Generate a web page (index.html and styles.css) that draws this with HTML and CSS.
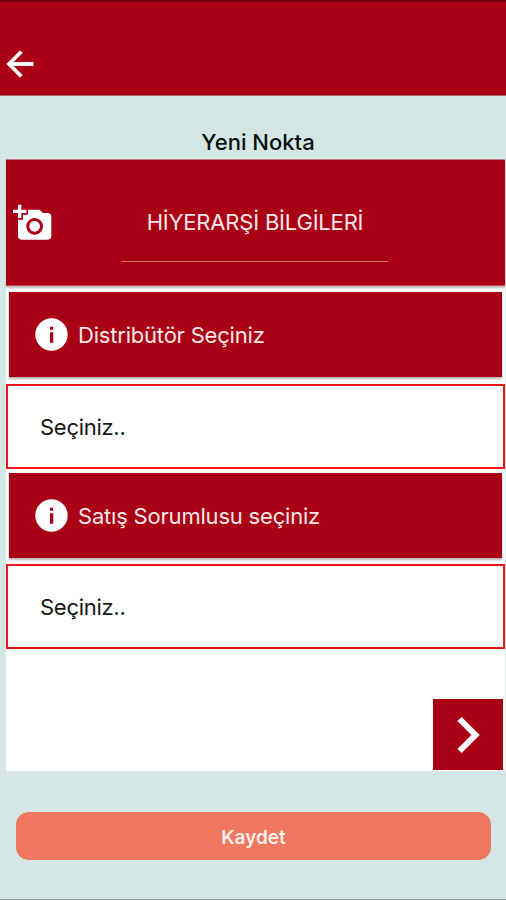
FILE: index.html
```html
<!DOCTYPE html>
<html lang="tr">
<head>
<meta charset="utf-8">
<title>Yeni Nokta</title>
<link rel="stylesheet" href="styles.css">
</head>
<body>
<header class="topbar">
  <svg class="back" viewBox="0 0 24 24"><path d="M20 11H7.8l5.6-5.6L12 4l-8 8 8 8 1.400-1.400L7.8 13H20z" stroke-width=".35" stroke-linejoin="round"/></svg>
</header>
<h1 class="title"><span>Yeni Nokta</span></h1>
<main class="panel">
  <section class="heading">
    <svg class="camera" viewBox="0 0 24 24"><path d="M3 4V1h2v3h3v2H5v3H3V6H0V4zm3 6V7h3V4h7l1.83 2H21c1.1 0 2 .9 2 2v12c0 1.1-.9 2-2 2H5c-1.1 0-2-.9-2-2V10zm7 9c2.76 0 5-2.24 5-5s-2.24-5-5-5-5 2.24-5 5 2.24 5 5 5zm-3.2-5c0 1.77 1.43 3.2 3.2 3.2s3.2-1.43 3.2-3.2-1.43-3.2-3.2-3.2-3.2 1.43-3.2 3.2z"/></svg>
    <h2 class="heading-text"><span>HİYERARŞİ BİLGİLERİ</span></h2>
  </section>
  <div class="label">
    <svg class="info" viewBox="0 0 33 33"><circle cx="16.5" cy="16.5" r="16.2"/><path class="mark" d="M15 8.800h3.300v3H15zM15 14.300h3.300v10.500H15z"/></svg>
    <span>Distribütör Seçiniz</span>
  </div>
  <div class="field"><span>Seçiniz..</span></div>
  <div class="label second">
    <svg class="info" viewBox="0 0 33 33"><circle cx="16.5" cy="16.5" r="16.2"/><path class="mark" d="M15 8.800h3.300v3H15zM15 14.300h3.300v10.500H15z"/></svg>
    <span>Satış Sorumlusu seçiniz</span>
  </div>
  <div class="field"><span>Seçiniz..</span></div>
  <button class="next" aria-label="İleri">
    <svg viewBox="0 0 70 71"><path d="M26.500 20 42.500 36 26.500 52"/></svg>
  </button>
</main>
<button class="save"><span>Kaydet</span></button>
</body>
</html>
```
FILE: styles.css
```css
* { box-sizing: border-box; }
body {
  margin: 0;
  height: 900px;
  display: flex;
  flex-direction: column;
  background: #d5e7e4;
  border-bottom: 1px solid #94a3a1;
  font-family: Inter, "Liberation Sans", sans-serif;
  overflow: hidden;
}
svg { display: block; flex: none; }
button { border: 0; padding: 0; font-family: inherit; }
.topbar {
  height: 96px;
  padding: 42px 0 0;
  background: #a90016;
  border-top: 2px solid #780010;
  border-bottom: 1px solid #b9636c;
}
.back { width: 40px; height: 40px; fill: #fff; stroke: #fff; }
.title {
  height: 63px;
  margin: 0;
  padding: 32px 0 0 10px;
  text-align: center;
  font-size: 22px;
  line-height: 28px;
  font-weight: 500;
  color: #06100f;
}
.panel {
  height: 612px;
  margin: 0 1px 0 6px;
  display: flex;
  flex-direction: column;
  background: #fff;
}
.heading {
  height: 127px;
  flex: none;
  display: flex;
  align-items: flex-start;
  background: #a90016;
  border-top: 1px solid #c07c85;
  border-bottom: 1px solid #b54b59;
  box-shadow: 0 2px 2px #bcb8b8;
}
.camera { width: 40px; height: 40px; margin: 43px 0 0 7px; fill: #fff; }
.heading-text {
  width: 266px;
  height: 102px;
  margin: 0 0 0 69px;
  padding-top: 48px;
  border-bottom: 1px solid #cf7660;
  text-align: center;
  font-size: 22px;
  line-height: 28px;
  font-weight: 400;
  letter-spacing: -.19px;
  color: #fce8e6;
  white-space: nowrap;
}
.label {
  height: 85px;
  flex: none;
  margin: 6px 3px 0;
  padding-left: 26px;
  display: flex;
  align-items: center;
  gap: 10px;
  background: #a90016;
  box-shadow: 0 2px 2px #b9b4b5;
  font-size: 22px;
  letter-spacing: -.2px;
  color: #fce8e6;
}
.info { width: 33px; height: 33px; fill: #fff; }
.mark { fill: #a90016; }
.second { margin-top: 4px; }
.field {
  height: 85px;
  flex: none;
  margin-top: 7px;
  padding-left: 32px;
  display: flex;
  align-items: center;
  border: 2px solid #ed161b;
  font-size: 22px;
  letter-spacing: -.28px;
  color: #151515;
}
.second + .field { margin-top: 6px; }
.next {
  width: 70px;
  height: 71px;
  margin: auto 2px 1px auto;
  background: #a90016;
}
.next path { fill: none; stroke: #fff; stroke-width: 6; }
.save {
  height: 48px;
  margin: 41px 15px 0 16px;
  padding-top: 2px;
  border-radius: 13px;
  background: #f17761;
  color: #fff1ed;
  font-size: 19px;
  font-weight: 600;
}
```
